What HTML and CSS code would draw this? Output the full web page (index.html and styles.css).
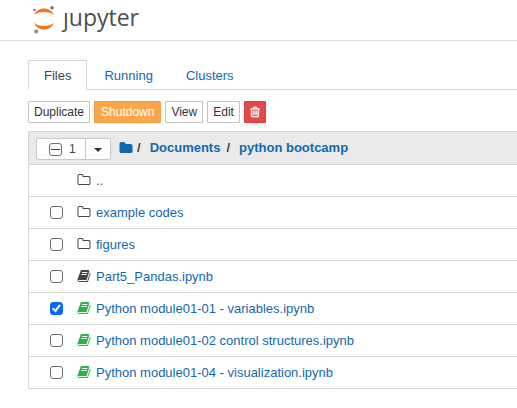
FILE: index.html
```html
<!DOCTYPE html>
<html lang="en">
<head>
<meta charset="utf-8">
<title>Home</title>
<link rel="stylesheet" href="styles.css">
</head>
<body>
<svg class="sprite" aria-hidden="true">
  <symbol id="folder-open" viewBox="0 0 1792 1792"><path d="M1600 1312v-704q0-40-28-68t-68-28h-704q-40 0-68-28t-28-68v-64q0-40-28-68t-68-28h-320q-40 0-68 28t-28 68v960q0 40 28 68t68 28h1216q40 0 68-28t28-68zm128-704v704q0 92-66 158t-158 66h-1216q-92 0-158-66t-66-158v-960q0-92 66-158t158-66h320q92 0 158 66t66 158v32h672q92 0 158 66t66 158z"/></symbol>
  <symbol id="folder" viewBox="0 0 1792 1792"><path d="M1728 608v704q0 92-66 158t-158 66h-1216q-92 0-158-66t-66-158v-960q0-92 66-158t158-66h320q92 0 158 66t66 158v32h672q92 0 158 66t66 158z"/></symbol>
  <symbol id="book" viewBox="0 0 1664 1792"><path d="M1639 478q40 57 18 129l-275 906q-19 64-76.500 107.500t-122.500 43.500h-923q-77 0-148.500-53.500t-99.500-131.500q-24-67-2-127 0-4 3-27t4-37q1-8-3-21.500t-3-19.500q2-11 8-21t16.500-23.500 16.500-23.500q23-38 45-91.500t30-91.500q3-10 .5-30t-.5-28q3-11 17-28t17-23q21-36 42-92t25-90q1-9-2.500-32t.5-28q4-13 22-30.500t22-22.500q19-26 42.500-84.500t27.500-96.500q1-8-3-25.500t-2-26.500q2-8 9-18t18-23 17-21q8-12 16.500-30.500t15-35 16-36 19.500-32 26.500-23.500 36-11.500 47.500 5.500l-1 3q38-9 51-9h761q74 0 114 56t18 130l-274 906q-36 119-71.500 153.500t-128.500 34.500h-869q-27 0-38 15-11 16-1 43 24 70 144 70h923q29 0 56-15.500t35-41.500l300-987q7-22 5-57 38 15 59 43zm-1064 2q-4 13 2 22.500t20 9.500h608q13 0 25.500-9.500t16.500-22.500l21-64q4-13-2-22.500t-20-9.500h-608q-13 0-25.500 9.500t-16.500 22.500zm-83 256q-4 13 2 22.500t20 9.500h608q13 0 25.500-9.500t16.500-22.500l21-64q4-13-2-22.500t-20-9.500h-608q-13 0-25.500 9.500t-16.500 22.500z"/></symbol>
  <symbol id="trash" viewBox="0 0 1792 1792"><path d="M704 736v576q0 14-9 23t-23 9h-64q-14 0-23-9t-9-23v-576q0-14 9-23t23-9h64q14 0 23 9t9 23zm256 0v576q0 14-9 23t-23 9h-64q-14 0-23-9t-9-23v-576q0-14 9-23t23-9h64q14 0 23 9t9 23zm256 0v576q0 14-9 23t-23 9h-64q-14 0-23-9t-9-23v-576q0-14 9-23t23-9h64q14 0 23 9t9 23zm128 724v-948h-896v948q0 22 7 40.500t14.500 27 10.500 8.500h832q3 0 10.500-8.500t14.500-27 7-40.500zm-672-1076h448l-48-117q-7-9-17-11h-317q-10 2-17 11zm928 32v64q0 14-9 23t-23 9h-96v948q0 83-47 143.500t-113 60.500h-832q-66 0-113-58.500t-47-141.500v-952h-96q-14 0-23-9t-9-23v-64q0-14 9-23t23-9h309l70-167q15-37 54-63t79-26h320q40 0 79 26t54 63l70 167h309q14 0 23 9t9 23z"/></symbol>
</svg>

<header class="header">
  <a class="logo" href="#">
    <svg class="logo-mark" viewBox="0 0 24 30" aria-hidden="true">
      <path fill="#f37726" d="M2 11C4 6.500 8 4.500 12 4.500s8 2 10 6.500C19.500 9 16 8 12 8S4.500 9 2 11z"/>
      <path fill="#f37726" d="M2 19c2 4.500 6 6.500 10 6.500s8-2 10-6.500c-2.500 2-6 3-10 3S4.500 21 2 19z"/>
      <circle cx="2.500" cy="6" r="1.200" fill="#767677"/>
      <circle cx="20" cy="3.700" r="1.800" fill="#767677"/>
      <circle cx="4.200" cy="27.500" r="2.100" fill="#8e8e8e"/>
    </svg>
    <span class="logo-text">ȷupyter</span>
  </a>
</header>

<main class="main">
  <nav class="tabs">
    <a class="tab tab-active" href="#">Files</a>
    <a class="tab" href="#">Running</a>
    <a class="tab" href="#">Clusters</a>
  </nav>

  <div class="toolbar">
    <button class="btn" type="button">Duplicate</button>
    <button class="btn btn-warning" type="button">Shutdown</button>
    <button class="btn" type="button">View</button>
    <button class="btn" type="button">Edit</button>
    <button class="btn btn-danger" type="button" aria-label="Delete"><svg class="trash-icon"><use href="#trash"/></svg></button>
  </div>

  <section class="list">
    <div class="list-header">
      <div class="selector">
        <label class="select-all"><input class="check check-mixed" type="checkbox"><span>1</span></label>
        <button class="select-menu" type="button" aria-label="Select items"><span class="caret"></span></button>
      </div>
      <nav class="breadcrumb">
        <a class="crumb-root" href="#" aria-label="Root folder"><svg class="icon"><use href="#folder"/></svg></a>
        <span class="slash">/</span>
        <a class="crumb" href="#">Documents</a>
        <span class="slash">/</span>
        <a class="crumb" href="#">python bootcamp</a>
      </nav>
    </div>
    <div class="row">
      <span class="check-space"></span>
      <svg class="icon"><use href="#folder-open"/></svg>
      <a href="#">..</a>
    </div>
    <div class="row">
      <input class="check" type="checkbox" aria-labelledby="f1">
      <svg class="icon"><use href="#folder-open"/></svg>
      <a id="f1" href="#">example codes</a>
    </div>
    <div class="row">
      <input class="check" type="checkbox" aria-labelledby="f2">
      <svg class="icon"><use href="#folder-open"/></svg>
      <a id="f2" href="#">figures</a>
    </div>
    <div class="row">
      <input class="check" type="checkbox" aria-labelledby="f3">
      <svg class="icon"><use href="#book"/></svg>
      <a id="f3" href="#">Part5_Pandas.ipynb</a>
    </div>
    <div class="row">
      <input class="check" type="checkbox" aria-labelledby="f4" checked>
      <svg class="icon icon-running"><use href="#book"/></svg>
      <a id="f4" href="#">Python module01-01 - variables.ipynb</a>
    </div>
    <div class="row">
      <input class="check" type="checkbox" aria-labelledby="f5">
      <svg class="icon icon-running"><use href="#book"/></svg>
      <a id="f5" href="#">Python module01-02 control structures.ipynb</a>
    </div>
    <div class="row">
      <input class="check" type="checkbox" aria-labelledby="f6">
      <svg class="icon icon-running"><use href="#book"/></svg>
      <a id="f6" href="#">Python module01-04 - visualization.ipynb</a>
    </div>
  </section>
</main>
</body>
</html>
```
FILE: styles.css
```css
* {
  box-sizing: border-box;
}

body {
  margin: 0;
  background: #fff;
  color: #444;
  font: 13px/20px "Liberation Sans", Arial, sans-serif;
}

a {
  color: #1268b0;
  text-decoration: none;
}

button {
  font: inherit;
  color: #333;
}

.sprite {
  position: absolute;
  width: 0;
  height: 0;
}

.header {
  height: 41px;
  padding: 4px 32px 0;
  border-bottom: 1px solid #e0e0e0;
}

.logo {
  display: inline-flex;
  color: #4e4e4e;
}

.logo-mark {
  width: 24px;
  height: 30px;
}

.logo-text {
  margin-left: 7px;
  font: 23px/26px "Open Sans", "Noto Sans", sans-serif;
}

.main {
  padding: 19px 0 0 28px;
}

.tabs {
  display: flex;
  gap: 1px;
  border-bottom: 1px solid #d5d5d5;
}

.tab {
  padding: 5px 15px 3px;
  margin-bottom: -1px;
  border: 1px solid transparent;
  border-radius: 2px 2px 0 0;
}

.tab-active {
  border-color: #d5d5d5 #d5d5d5 #fff;
  color: #444;
}

.toolbar {
  display: flex;
  gap: 4px;
  padding: 11px 0 8px;
}

.btn {
  height: 22px;
  padding: 0 5px;
  border: 1px solid #c4c4c4;
  border-radius: 1px;
  background: #fff;
  font-size: 12px;
  line-height: 20px;
}

.btn-warning {
  padding: 0 6px;
  border-color: #f79d3c;
  background: #fba64b;
  color: #fff;
}

.btn-danger {
  padding: 0 4px;
  border-color: #dc3c3c;
  background: #e24a4a;
  color: #fff;
}

.trash-icon {
  display: block;
  width: 12px;
  height: 12px;
  fill: currentColor;
  stroke: currentColor;
  stroke-width: 50;
}

.list {
  border: 1px solid #d5d5d5;
  border-right: 0;
  border-radius: 2px 0 0 2px;
}

.list-header {
  display: flex;
  align-items: center;
  height: 32px;
  padding-left: 7px;
  background: #eaeaea;
}

.selector {
  display: flex;
  margin-top: 2px;
  border: 1px solid #c8c8c8;
  border-radius: 2px;
  background: #fff;
}

.select-all {
  display: flex;
  align-items: center;
  gap: 7px;
  width: 49px;
  height: 20px;
  padding-left: 12px;
  border-right: 1px solid #c8c8c8;
  font-size: 12px;
}

.select-menu {
  display: flex;
  align-items: center;
  justify-content: center;
  width: 24px;
  padding: 2px 0 0;
  border: 0;
  background: none;
}

.caret {
  border: 4px solid transparent;
  border-top-color: #333;
  border-bottom: 0;
}

.breadcrumb {
  display: flex;
  align-items: center;
  padding-left: 8px;
  font-weight: bold;
}

.crumb-root {
  display: flex;
}

.slash {
  margin: 0 9px 0 6px;
}

.crumb-root + .slash {
  margin-left: 4px;
}

.row {
  display: flex;
  align-items: center;
  height: 32px;
  padding-left: 21px;
  border-top: 1px solid #d5d5d5;
}

.check {
  appearance: none;
  flex: none;
  width: 13px;
  height: 13px;
  margin: 0;
  border: 1px solid #6f6f6f;
  border-radius: 3px;
  background: #fff;
}

.check:checked {
  display: grid;
  place-items: center;
  border-color: #0a66ff;
  background: #0a66ff;
}

.check:checked::before {
  content: "";
  width: 9px;
  height: 9px;
  background: #fff;
  clip-path: polygon(0 56%, 14% 40%, 36% 62%, 80% 2%, 98% 16%, 40% 94%);
}

.check-mixed {
  display: grid;
  place-items: center;
}

.check-mixed::before {
  content: "";
  width: 9px;
  height: 1px;
  background: #444;
}

.check-space {
  width: 13px;
}

.icon {
  flex: none;
  width: 14px;
  height: 14px;
  fill: currentColor;
}

.row .icon {
  margin: 0 5px 2px 14px;
}

.row .icon-running {
  color: #2fb24c;
}
```
